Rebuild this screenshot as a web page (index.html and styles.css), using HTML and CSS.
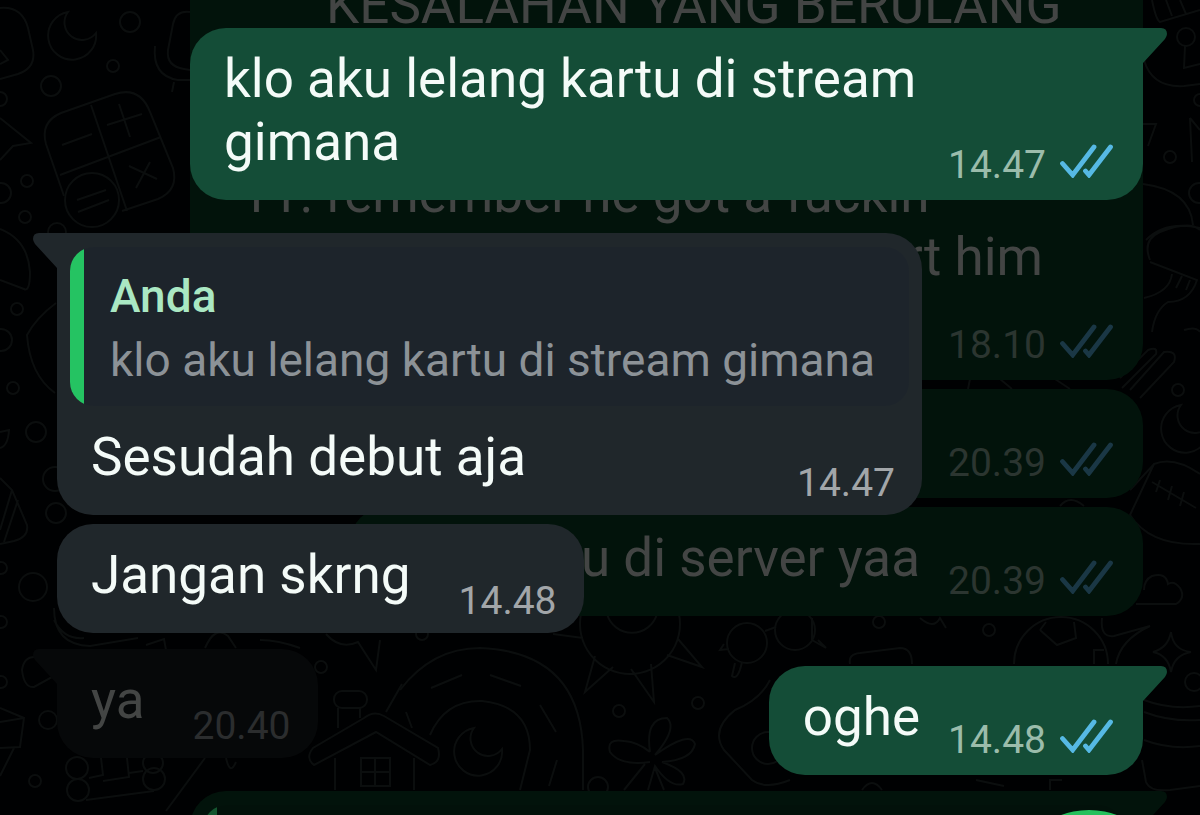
FILE: index.html
```
<!DOCTYPE html>
<html lang="id">
<head>
    <meta charset="UTF-8">
    <meta name="viewport" content="width=device-width, initial-scale=1.0">
    <title>Chat</title>
    <link rel="stylesheet" href="styles.css">
</head>
<body>

<!-- shared shapes -->
<svg class="defs" aria-hidden="true">
    <symbol id="ticks" viewBox="0 0 53 34">
        <path d="M2.500 19.500L12.700 31L34 3M25.500 27L29 31L50.500 3" fill="none" stroke="currentColor" stroke-width="4.800" stroke-linecap="round"/>
    </symbol>
    <symbol id="tail" viewBox="0 0 25 36">
        <path d="M0 0H19Q25 0 25 6Q25 8 23 11L1 35V36H0Z" fill="currentColor"/>
    </symbol>
    <symbol id="moon" viewBox="-26 -26 52 52">
        <path d="M-5 -23A24 24 0 1 0 23 -2A17 17 0 0 1 -5 -23Z"/>
    </symbol>
</svg>

<main class="screen">
    <svg class="wallpaper" width="1200" height="815" viewBox="0 0 1200 815" aria-hidden="true">
        <!-- left side -->
        <path d="M0 8Q22 6 28 28L33 50Q36 68 18 74L0 79M0 50L8 60L0 64"/>
        <use href="#moon" x="47" y="9" width="52" height="52"/>
        <circle cx="130" cy="22" r="10"/><circle cx="113" cy="66" r="6"/><circle cx="51" cy="86" r="10"/><circle cx="0" cy="99" r="7"/>
        <path d="M190 12Q176 10 173 24L168 50Q166 66 184 69L190 70M155 46Q152 76 178 80L190 80M174 82L172 92"/>
        <path d="M0 118L31 143L13 146L0 160"/>
        <path d="M61 113L115 94Q140 86 150 112L173 168Q179 190 158 199L122 211M61 113Q40 122 46 144L64 196M91 105L127 211M60 175L161 137M62 145L92 134M107 125L142 114M119 104L130 137M129 166L157 179M150 162L136 188M77 200L106 190M78 212L109 200"/>
        <circle cx="92" cy="200" r="27"/>
        <circle cx="27" cy="181" r="6"/><circle cx="1" cy="193" r="10"/><circle cx="25" cy="217" r="6"/><circle cx="57" cy="232" r="9"/>
        <path d="M0 229Q28 240 30 272Q30 292 24 289L0 280M56 303Q36 318 27 335Q30 375 55 393"/>
        <circle cx="17" cy="309" r="6"/><circle cx="1" cy="340" r="11"/><circle cx="13" cy="388" r="6"/><circle cx="36" cy="432" r="10"/><circle cx="55" cy="479" r="12"/>
        <path d="M0 432L9 430Q8 446 0 448M0 478L12 490L27 525Q29 537 14 541L0 544M12 490L0 530M18 500L4 542"/>
        <circle cx="56" cy="513" r="10"/><circle cx="33" cy="587" r="14"/><circle cx="1" cy="568" r="6"/><circle cx="1" cy="622" r="6"/>
        <path d="M54 608Q54 645 90 646L138 638M54 620Q64 640 84 638M22 670Q24 656 36 657L54 676L34 687Q24 688 22 670ZM0 708L24 718L20 747L0 748M24 718L0 722M14 748L0 776"/>
        <circle cx="48" cy="720" r="9"/><circle cx="35" cy="781" r="6"/><circle cx="1" cy="682" r="6"/>
        <path d="M146 645L164 639L166 650M205 648Q215 625 228 636L236 648M260 640Q278 640 300 648"/>
        <circle cx="78" cy="790" r="11"/><circle cx="77" cy="768" r="11"/><circle cx="154" cy="779" r="11"/><circle cx="153" cy="763" r="10"/>
        <path d="M86 800L154 791M89 778L103 775L101 758M103 781L129 777L127 758M129 773L143 771M205 758L166 811M226 758Q230 776 236 762"/>
        <!-- middle -->
        <path d="M326 634Q340 650 358 642L376 670L380 640"/>
        <circle cx="321" cy="667" r="6"/>
        <rect x="334" y="691" width="33" height="17" rx="8"/>
        <path d="M338 708V728M360 708V718M313 748Q305 758 314 765L376 732L430 765Q442 762 438 748L384 716Q374 710 364 718ZM335 758V790M414 758V790M361 758H390V786H361ZM375 758V786M361 772H390M386 712L402 684"/>
        <path d="M400 690Q432 648 480 648Q580 652 583 750V790M430 735Q445 700 482 701Q530 706 530 750L520 790M431 688L462 675M490 675L521 686M540 705L556 732M557 760L549 786M406 712L412 728"/>
        <use href="#moon" x="453" y="725" width="52" height="52"/>
        <circle cx="422" cy="634" r="6"/>
        <path d="M581 614A50 50 0 1 0 679 614M607 614A26 26 0 0 0 657 614M553 634L583 638M595 656L585 692L613 667M631 669L654 702L651 664M667 655L702 667L678 639"/>
        <circle cx="747" cy="643" r="20"/><circle cx="795" cy="630" r="20"/>
        <path d="M765 631L776 627M735 663L732 676Q738 681 742 662M724 644L720 650L729 649"/>
        <circle cx="619" cy="711" r="6"/><circle cx="698" cy="703" r="6"/><circle cx="598" cy="787" r="10"/>
        <path d="M650 752Q645 718 667 718Q678 728 655 755Q690 730 695 744Q692 760 662 762Q690 772 683 784Q670 788 655 766L648 790M650 762Q620 766 610 752Q606 738 624 741Q638 742 650 752M645 764L624 790M655 768L664 790"/>
        <path d="M770 680Q760 700 735 710Q710 730 724 750L752 780Q765 790 790 780"/><circle cx="768" cy="748" r="16"/>
        <!-- right side -->
        <path d="M812 618V640L826 648L818 640M850 664Q848 654 860 653L900 648Q912 648 912 664M920 618Q934 630 940 618L946 628"/>
        <circle cx="879" cy="622" r="6"/><circle cx="989" cy="630" r="6"/>
        <path d="M1014 664A46 46 0 0 1 1108 664M1040 630L1057 645L1076 638L1074 622M1040 630L1046 622M1094 664V650H1104M1102 618Q1100 638 1114 636L1150 626Q1120 640 1116 664"/>
        <path d="M1171 632Q1173 650 1191 652Q1174 655 1171 672Q1168 655 1153 652Q1168 648 1171 632Z"/>
        <circle cx="1194" cy="682" r="9"/>
        <path d="M1144 700Q1170 710 1200 706M1144 712Q1170 722 1200 720M1144 740Q1170 750 1200 746M1142 760L1146 782Q1150 792 1170 790L1200 786"/>
        <path d="M1136 604H1176Q1186 598 1180 588Q1174 580 1168 584Q1166 572 1152 576Q1144 580 1144 590"/>
        <path d="M1152 0Q1156 20 1160 22L1200 10M1166 0L1172 16M1180 0L1186 14M1144 60Q1152 88 1184 86L1200 84"/>
        <circle cx="1186" cy="37" r="9"/><path d="M1185 46L1184 68L1200 64"/>
        <circle cx="1200" cy="100" r="6"/><circle cx="1170" cy="157" r="6"/><circle cx="1199" cy="193" r="10"/>
        <path d="M1143 124L1156 124L1148 146M1190 118L1192 162M1190 118L1200 130M1143 184Q1190 190 1193 225M1146 240Q1165 220 1200 228M1150 260Q1142 240 1160 232Q1190 220 1200 230M1150 262L1197 280Q1190 302 1168 302Q1155 310 1152 332M1172 274Q1170 292 1144 298M1182 276L1176 288M1190 280L1186 290"/>
        <path d="M1120 378L1148 350Q1158 346 1156 354L1122 388M1130 390L1164 352Q1178 350 1174 362L1140 398M1184 330Q1196 326 1200 332"/>
        <circle cx="1178" cy="390" r="6"/><use href="#moon" x="1160" y="402" width="52" height="52"/>
        <path d="M1130 490L1154 464Q1174 456 1200 474M1154 464L1130 515Q1150 546 1200 544M1152 482L1196 508M1160 480L1156 492M1172 486L1168 500M1184 492L1180 506"/>
        <path d="M860 385L872 392M970 379L968 389M1000 379L1012 389M1055 379L1070 389M860 500L880 496M1060 506Q1070 494 1084 506M862 790Q872 776 882 790M976 780L1004 786M1050 790V780H1062"/>
    </svg>

    <!-- messages behind the shade -->
    <section class="thread thread-dim">
        <div class="bubble out scrolled">
            <p class="text">
                <span class="line indent">KESALAHAN YANG BERULANG</span>
                <span class="line skip">11. remember he got a fuckin</span>
                <span class="line end">rt him</span>
            </p>
            <div class="meta"><time>18.10</time><svg class="ticks"><use href="#ticks"/></svg></div>
        </div>
        <div class="bubble out half">
            <p class="text"></p>
            <div class="meta"><time>20.39</time><svg class="ticks"><use href="#ticks"/></svg></div>
        </div>
        <div class="bubble out wide">
            <p class="text">u di server yaa</p>
            <div class="meta"><time>20.39</time><svg class="ticks"><use href="#ticks"/></svg></div>
        </div>
        <div class="bubble in first">
            <svg class="tail"><use href="#tail"/></svg>
            <p class="text">ya</p>
            <div class="meta"><time>20.40</time></div>
        </div>
        <div class="bubble out first full">
            <svg class="tail"><use href="#tail"/></svg>
            <blockquote class="quote"></blockquote>
        </div>
    </section>

    <!-- current messages -->
    <section class="thread">
        <div class="bubble out first long">
            <svg class="tail"><use href="#tail"/></svg>
            <p class="text">klo aku lelang kartu di stream gimana</p>
            <div class="meta"><time>14.47</time><svg class="ticks"><use href="#ticks"/></svg></div>
        </div>
        <div class="bubble in first has-quote">
            <svg class="tail"><use href="#tail"/></svg>
            <blockquote class="quote">
                <strong>Anda</strong>
                <span>klo aku lelang kartu di stream gimana</span>
            </blockquote>
            <p class="text">Sesudah debut aja</p>
            <div class="meta"><time>14.47</time></div>
        </div>
        <div class="bubble in">
            <p class="text">Jangan skrng</p>
            <div class="meta"><time>14.48</time></div>
        </div>
        <div class="bubble out first">
            <svg class="tail"><use href="#tail"/></svg>
            <p class="text">oghe</p>
            <div class="meta"><time>14.48</time><svg class="ticks"><use href="#ticks"/></svg></div>
        </div>
    </section>

    <button class="fab" type="button" aria-label="Kirim"></button>
</main>

</body>
</html>
```
FILE: styles.css
```
* {
    box-sizing: border-box;
}
body {
    margin: 0;
    background: #000102;
    font-family: Roboto, sans-serif;
    overflow: hidden;
}
p, blockquote {
    margin: 0;
}
.defs {
    position: absolute;
    width: 0;
    height: 0;
}
.screen {
    position: relative;
    display: grid;
    height: 100vh;
    overflow: hidden;
}
.wallpaper {
    position: absolute;
    top: 0;
    left: 0;
    fill: none;
    stroke: #0b0e0e;
    stroke-width: 2;
}

/* Both threads share one grid cell, the dim one lies behind */
.thread {
    --out: #144d37;
    --in: #20272b;
    --quote: #1d242b;
    --bar: #25c362;
    --text: #f4fbf8;
    --time-out: #9bbcab;
    --time-in: #a2a6a9;
    --tick: #56b9e4;
    grid-area: 1 / 1;
    position: relative;
    min-height: 0;
    display: flex;
    flex-direction: column;
    gap: 9px;
    padding: 0 57px;
    color: var(--text);
}
.thread-dim {
    --out: #02130b;
    --in: #060809;
    --quote: #02110a;
    --bar: #14552f;
    --text: #434544;
    --time-out: #2b3530;
    --time-in: #2b2d2e;
    --tick: #1a3745;
}

.bubble {
    position: relative;
    flex-shrink: 0;
    display: flex;
    align-items: flex-end;
    max-width: calc(100% - 133px);
    border-radius: 36px;
}
.out {
    align-self: flex-end;
    column-gap: 28px;
    padding: 20px 30px 11px 34px;
    background: var(--out);
}
.in {
    align-self: flex-start;
    column-gap: 48px;
    padding: 20px 27px 8px 34px;
    background: var(--in);
}
.first {
    margin-top: 24px;
}
.thread .first:first-child {
    margin-top: 28px;
}
.out.first {
    border-top-right-radius: 0;
}
.in.first {
    border-top-left-radius: 0;
}
.long {
    column-gap: 16px;
}
.tail {
    position: absolute;
    top: 0;
    width: 25px;
    height: 36px;
}
.out .tail {
    right: -24px;
    color: var(--out);
}
.in .tail {
    left: -24px;
    color: var(--in);
    transform: scaleX(-1);
}

.text {
    min-height: 63px;
    margin-bottom: 15px;
    font-size: 53px;
    line-height: 63px;
}
.in .text {
    margin-bottom: 18px;
}
.meta {
    display: flex;
    align-items: baseline;
    gap: 14px;
    margin-left: auto;
    font-size: 39px;
    line-height: 48px;
    color: var(--time-out);
}
.in .meta {
    color: var(--time-in);
}
.ticks {
    width: 53px;
    height: 34px;
    color: var(--tick);
}

.has-quote {
    display: grid;
    grid-template-columns: 1fr auto;
    padding-top: 14px;
}
.quote {
    display: flex;
    flex-direction: column;
    grid-column: 1 / -1;
    justify-self: stretch;
    margin: 0 -14px 20px -21px;
    padding: 17px 34px 14px 40px;
    border-radius: 24px;
    background: linear-gradient(to right, var(--bar) 14px, var(--quote) 14px);
    font-size: 46px;
    line-height: 64px;
    color: #8c9297;
}
.quote strong {
    font-weight: 500;
    color: #aae8c3;
}

.scrolled {
    flex-direction: column;
    align-items: stretch;
    width: 100%;
    margin-top: -46px;
    border-radius: 0 0 36px 36px;
}
.scrolled .meta {
    margin-top: 17px;
}
.line {
    display: block;
}
.indent {
    padding-left: 102px;
}
.skip {
    margin-top: 126px;
    padding-left: 16px;
}
.end {
    padding-right: 70px;
    text-align: right;
}
.half {
    width: 60%;
}
.wide {
    width: 73%;
}
.wide .text {
    flex: 1;
    text-align: right;
}
.full {
    width: 100%;
    padding: 14px 34px;
}
.full .quote {
    flex: 1;
    min-height: 158px;
}

.fab {
    position: absolute;
    top: 810px;
    right: 31px;
    width: 160px;
    height: 160px;
    padding: 0;
    border: none;
    border-radius: 50%;
    background: #25c05c;
}
```
